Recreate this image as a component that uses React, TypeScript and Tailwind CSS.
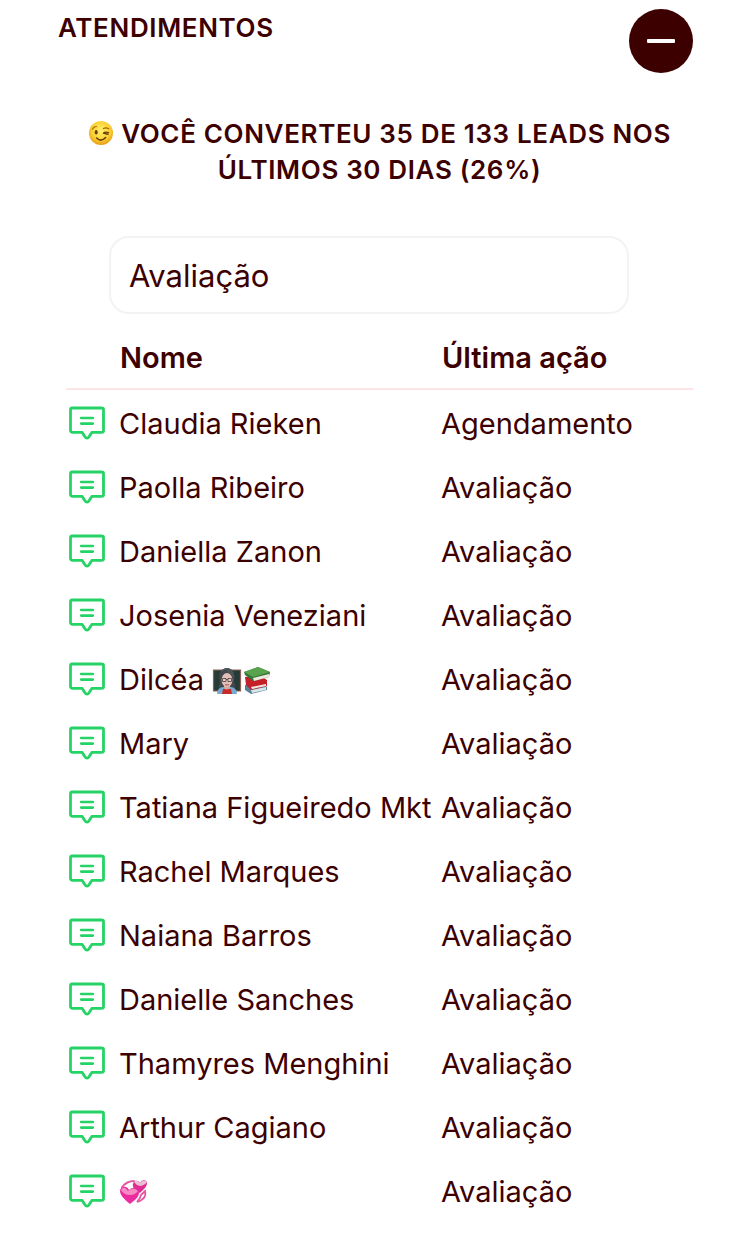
import { useState } from "react"

type Lead = {
  name: string
  action: string
  emoji?: "teacher" | "hearts"
}

const leads: Lead[] = [
  { name: "Claudia Rieken", action: "Agendamento" },
  { name: "Paolla Ribeiro", action: "Avaliação" },
  { name: "Daniella Zanon", action: "Avaliação" },
  { name: "Josenia Veneziani", action: "Avaliação" },
  { name: "Dilcéa", action: "Avaliação", emoji: "teacher" },
  { name: "Mary", action: "Avaliação" },
  { name: "Tatiana Figueiredo Mkt", action: "Avaliação" },
  { name: "Rachel Marques", action: "Avaliação" },
  { name: "Naiana Barros", action: "Avaliação" },
  { name: "Danielle Sanches", action: "Avaliação" },
  { name: "Thamyres Menghini", action: "Avaliação" },
  { name: "Arthur Cagiano", action: "Avaliação" },
  { name: "", action: "Avaliação", emoji: "hearts" },
]

export default function App() {
  const [open, setOpen] = useState(true)
  const [filter, setFilter] = useState("Avaliação")

  return (
    <main className="min-h-screen bg-white pl-[58px] pr-[61px] pt-[9px] pb-5 font-['Inter',sans-serif] text-[#3d0000]">
      <header className="flex items-start justify-between">
        <h1 className="pt-px text-[26px] leading-9 font-semibold tracking-wide uppercase">Atendimentos</h1>
        <button
          type="button"
          aria-label={open ? "Recolher" : "Expandir"}
          aria-expanded={open}
          onClick={() => setOpen(!open)}
          className="flex size-16 items-center justify-center rounded-full bg-[#3d0000]"
        >
          <span className="h-1 w-7 rounded-[1px] bg-white" />
        </button>
      </header>

      {open && (
        <section className="pl-2">
          <p className="mt-[43px] text-center text-[26px] leading-9 font-semibold tracking-wide uppercase">
            <WinkEmoji /> Você converteu 35 de 133 leads nos últimos 30 dias (26%)
          </p>

          <div className="mt-12 pl-[43px] pr-16">
            <select
              aria-label="Última ação"
              value={filter}
              onChange={(e) => setFilter(e.target.value)}
              className="block h-[78px] w-full appearance-none rounded-[20px] border-2 border-[#f3f3f3] bg-white px-[18px] pt-0.5 font-['Inter',sans-serif] text-[31px]"
            >
              <option>Avaliação</option>
              <option>Agendamento</option>
            </select>
          </div>

          <table className="mt-3 w-full table-fixed border-separate border-spacing-0 text-left text-[29px] leading-9">
            <colgroup>
              <col className="w-[46px]" />
              <col className="w-[322px]" />
              <col />
            </colgroup>
            <thead>
              <tr>
                <td className="h-16 border-b-2 border-[#ffe4e6]" />
                <th scope="col" className="h-16 border-b-2 border-[#ffe4e6] px-2 pt-0.5 font-semibold">Nome</th>
                <th scope="col" className="h-16 border-b-2 border-[#ffe4e6] px-2 pt-0.5 font-semibold">Última ação</th>
              </tr>
            </thead>
            <tbody>
              {leads.map((lead, i) => (
                <tr key={i}>
                  <td className="h-16 pt-0.5 pl-[3px]">
                    <button type="button" aria-label={`Conversar com ${lead.name || "lead"}`} className="block">
                      <ChatIcon />
                    </button>
                  </td>
                  <td className="h-16 pt-1 pr-2 pl-[7px] whitespace-nowrap">
                    {lead.name}
                    {lead.emoji === "teacher" && (
                      <>
                        {" "}
                        <TeacherEmoji />
                        <BooksEmoji />
                      </>
                    )}
                    {lead.emoji === "hearts" && <HeartsEmoji />}
                  </td>
                  <td className="h-16 pt-1 pr-2 pl-[7px]">{lead.action}</td>
                </tr>
              ))}
            </tbody>
          </table>
        </section>
      )}
    </main>
  )
}

function ChatIcon() {
  return (
    <svg
      viewBox="0 0 36 36"
      className="size-9"
      fill="none"
      stroke="#25d366"
      strokeWidth="2.8"
      strokeLinecap="round"
      strokeLinejoin="round"
    >
      <path d="M3 3h29.7a1.8 1.8 0 0 1 1.8 1.8v20.8a1.8 1.8 0 0 1-1.8 1.8H22.8L20.4 31.2q-2.4 4-4.8 0L13.2 27.4H3.3a1.8 1.8 0 0 1-1.8-1.8V4.8A1.8 1.8 0 0 1 3.3 3z" />
      <path d="M12.2 13h11.6M12.2 18.6h11.6" strokeWidth="2.6" />
    </svg>
  )
}

function WinkEmoji() {
  return (
    <svg viewBox="0 0 26 26" className="inline-block size-[26px] align-[-3px]" role="img" aria-label="piscadela">
      <defs>
        <radialGradient id="wink" cx=".5" cy=".4" r=".6">
          <stop offset="0" stopColor="#fff06a" />
          <stop offset=".65" stopColor="#fbd033" />
          <stop offset="1" stopColor="#e69a12" />
        </radialGradient>
      </defs>
      <circle cx="13" cy="13" r="12" fill="url(#wink)" />
      <ellipse cx="8.2" cy="12.3" rx="1.5" ry="2.2" fill="#6b3b06" />
      <path d="M4.4 9.2q1.2-2.6 4-2.7M15.5 8.6q2.6-1.5 5.2.2" fill="none" stroke="#a8670c" strokeWidth="1.2" strokeLinecap="round" />
      <path d="M15.5 13.2q1.6-1.8 5-.6M16 13.4l4 .8" fill="none" stroke="#6b3b06" strokeWidth="1.4" strokeLinecap="round" />
      <path d="M8.6 18q4.6 4.4 9-.5" fill="none" stroke="#6b3b06" strokeWidth="1.6" strokeLinecap="round" />
    </svg>
  )
}

function TeacherEmoji() {
  return (
    <svg viewBox="0 0 30 30" className="inline-block size-[30px] align-[-5px]" role="img" aria-label="professora">
      <path d="M1.5 5h27v21h-27z" fill="#263b36" stroke="#8b6257" strokeWidth="1.2" />
      <path d="M7 25q-1-4 1-8-2-9 2-12 5-4 10 0 4 5 2 12 2 4 1 8z" fill="#42484c" />
      <path d="M5 29q0-6 6-7h8q6 1 6 7z" fill="#78a9d1" />
      <path d="M11 24h8l1 5H10z" fill="#c92b2b" />
      <path d="M12 19h6v4q-3 3-6 0z" fill="#d5a999" />
      <ellipse cx="15" cy="15" rx="5.4" ry="7" fill="#e2c0b8" />
      <path d="M8 14q-1-8 6-9l8 8q1-8-6-10-9 0-8 11z" fill="#4a5457" />
      <path d="M10.5 13.5h3.5v3h-3.5zM16 13.5h3.5v3H16zM14 14.5h2" fill="#eee" fillOpacity=".4" stroke="#5d4748" strokeWidth=".9" />
      <path d="M13 19.5q2 1.2 4 0" fill="none" stroke="#b44b51" />
    </svg>
  )
}

function BooksEmoji() {
  return (
    <svg viewBox="0 0 30 30" className="inline-block size-[30px] align-[-5px]" role="img" aria-label="livros">
      <path d="M3 20l16-2 6 4v3L9 29l-6-4z" fill="#57829b" />
      <path d="M9 25l15-3v3L10 28z" fill="#d9e3e8" />
      <path d="M3 12l16-1 6 4v6L9 25l-5-5z" fill="#c5202a" />
      <path d="M9 22l15-3v2L10 24z" fill="#f2e6e1" />
      <path d="M2 7L16 2l12 5-1 5-16 4-8-6z" fill="#36743a" />
      <path d="M11 13l16-4v3l-15 4z" fill="#ece9df" />
      <path d="M2 7L16 2l12 5-17 5z" fill="#58a44c" />
    </svg>
  )
}

function HeartsEmoji() {
  return (
    <svg viewBox="0 0 30 30" className="inline-block size-[30px] align-[-5px]" role="img" aria-label="corações">
      <path d="M3 10q5-6 12-6M26 14q2 8-8 11 3-3 4-7z" fill="none" stroke="#e5579f" strokeWidth="1.8" strokeLinecap="round" />
      <path d="M21 16c-5-3-8-6-7-9 1-4 5-4 7-1 2-4 7-3 7 0 0 4-4 7-7 10z" fill="#df2c91" />
      <path d="M15 5q3-3 6 1 3-4 7-1-2 3-7 4-4-1-6-4z" fill="#e9bfd3" />
      <path d="M11 27C5 22 1 18 1 14c0-5 7-6 9-1 4-4 10-2 10 3 0 4-5 8-9 11z" fill="#ed2ca0" />
      <path d="M2 13q3-5 7 1 5-5 10 0-3 4-8 4-6 0-9-5z" fill="#f5a6cc" fillOpacity=".8" />
    </svg>
  )
}
